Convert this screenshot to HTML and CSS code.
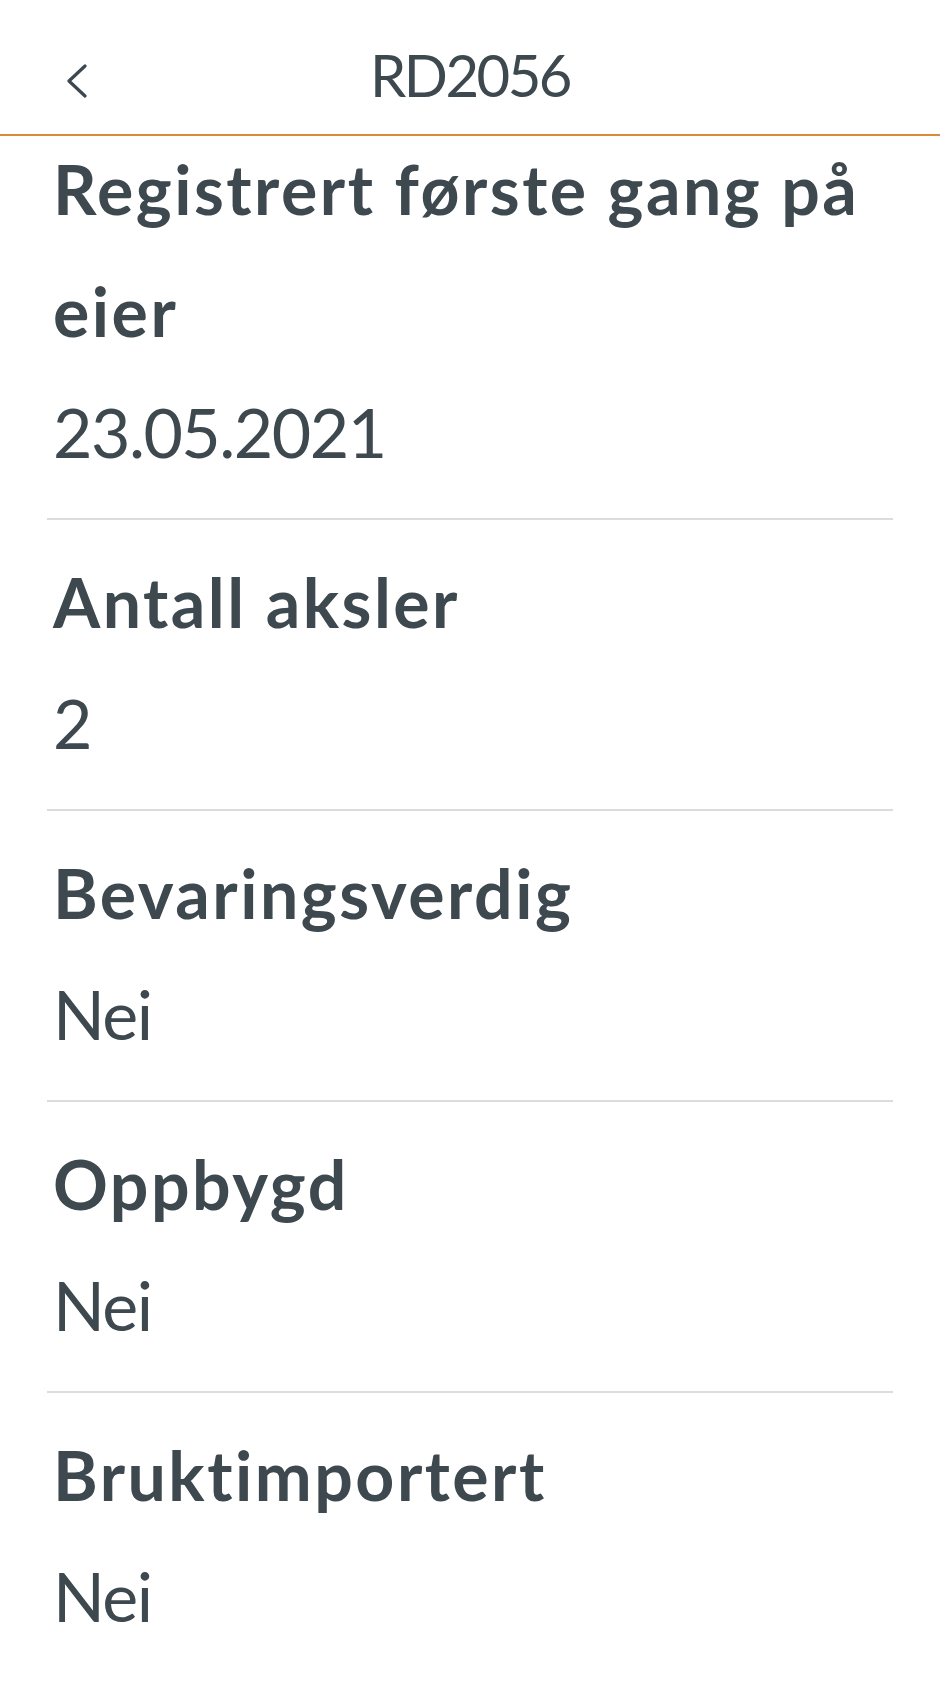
FILE: index.html
```html
<!DOCTYPE html>
<html lang="no">
<head>
    <meta charset="UTF-8">
    <meta name="viewport" content="width=device-width, initial-scale=1.0">
    <title>RD2056</title>
    <link rel="stylesheet" href="styles.css">
</head>
<body>
    <header class="topbar">
        <button class="back" aria-label="Tilbake">
            <svg width="22" height="34" viewBox="0 0 22 34">
                <path d="M19 2 L3 17 L19 32" fill="none" stroke="#3d474e" stroke-width="3.2" stroke-linecap="round" stroke-linejoin="round"/>
            </svg>
        </button>
        <h1 class="title">RD2056</h1>
    </header>

    <main class="details">
        <div class="detail first">
            <h2 class="label">Registrert første gang på eier</h2>
            <div class="value">23.05.2021</div>
        </div>
        <div class="detail">
            <h2 class="label">Antall aksler</h2>
            <div class="value">2</div>
        </div>
        <div class="detail">
            <h2 class="label">Bevaringsverdig</h2>
            <div class="value">Nei</div>
        </div>
        <div class="detail">
            <h2 class="label">Oppbygd</h2>
            <div class="value">Nei</div>
        </div>
        <div class="detail">
            <h2 class="label">Bruktimportert</h2>
            <div class="value">Nei</div>
        </div>
    </main>
</body>
</html>
```

FILE: styles.css
```css
body {
margin: 0;
font-family: Lato, "Noto Sans", Arial, sans-serif;
font-variant-ligatures: none;
color: #3d484f;
background: #fff;
}


.topbar {
position: relative;
display: flex;
align-items: center;
justify-content: center;
box-sizing: border-box;
height: 136px;
padding-top: 14px;
border-bottom: 2px solid #d98a3b;
background: #fff;
z-index: 1;
}


.back {
position: absolute;
left: 66px;
top: 64px;
padding: 0;
border: none;
background: none;
}


.back svg {
display: block;
}


.title {
margin: 0;
font-size: 58px;
font-weight: 400;
letter-spacing: -2.5px;
}


.details {
margin: -8px 47px 0;
}


.detail {
padding: 21px 6px 26px;
border-bottom: 2px solid #dcdcdc;
}


.detail.first {
padding-top: 0;
}


.label {
margin: 0;
font-size: 68px;
font-weight: 700;
line-height: 122px;
letter-spacing: 2.5px;
}


.value {
font-size: 68px;
line-height: 120px;
letter-spacing: -1.5px;
}
```
